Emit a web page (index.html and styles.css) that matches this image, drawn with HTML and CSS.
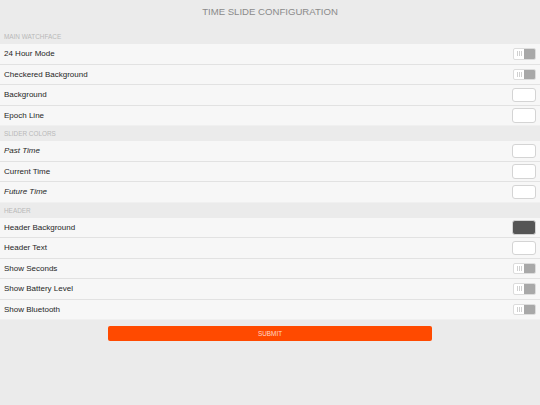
FILE: index.html
```html
<!DOCTYPE html>
<html>
<head>
<meta charset="utf-8">
<link rel="stylesheet" href="styles.css">
</head>
<body>
<div class="page">
  <h1 class="title">TIME SLIDE CONFIGURATION</h1>

  <div class="section-label">MAIN WATCHFACE</div>
  <div class="row"><span class="label">24 Hour Mode</span><span class="toggle"><span class="grip"><i></i><i></i><i></i></span><span class="knob"></span></span></div>
  <div class="row"><span class="label">Checkered Background</span><span class="toggle"><span class="grip"><i></i><i></i><i></i></span><span class="knob"></span></span></div>
  <div class="row"><span class="label">Background</span><span class="swatch"></span></div>
  <div class="row last"><span class="label">Epoch Line</span><span class="swatch"></span></div>

  <div class="section-label">SLIDER COLORS</div>
  <div class="row"><span class="label italic">Past Time</span><span class="swatch"></span></div>
  <div class="row"><span class="label">Current Time</span><span class="swatch"></span></div>
  <div class="row last"><span class="label italic">Future Time</span><span class="swatch"></span></div>

  <div class="section-label">HEADER</div>
  <div class="row"><span class="label">Header Background</span><span class="swatch dark"></span></div>
  <div class="row"><span class="label">Header Text</span><span class="swatch"></span></div>
  <div class="row"><span class="label">Show Seconds</span><span class="toggle"><span class="grip"><i></i><i></i><i></i></span><span class="knob"></span></span></div>
  <div class="row"><span class="label">Show Battery Level</span><span class="toggle"><span class="grip"><i></i><i></i><i></i></span><span class="knob"></span></span></div>
  <div class="row last"><span class="label">Show Bluetooth</span><span class="toggle"><span class="grip"><i></i><i></i><i></i></span><span class="knob"></span></span></div>

  <div class="actions"><button class="submit">SUBMIT</button></div>
</div>
</body>
</html>
```

FILE: styles.css
```css
html, body {
  margin: 0;
  padding: 0;
  background: #ebebeb;
}
body {
  font-family: "Liberation Sans", Arial, sans-serif;
  width: 540px;
  height: 405px;
  overflow: hidden;
}
.page {
  display: flex;
  flex-direction: column;
}
.title {
  margin: 0;
  height: 29px;
  box-sizing: border-box;
  padding-top: 6px;
  font-size: 9.6px;
  line-height: 12px;
  font-weight: normal;
  color: #8a8a8a;
  text-align: center;
}
.section-label {
  height: 15px;
  line-height: 15px;
  padding-left: 4px;
  font-size: 6.4px;
  color: #b8b8b8;
  background: #ebebeb;
}
.row {
  height: 19.5px;
  border-bottom: 1px solid #e2e2e2;
  background: #f7f7f7;
  display: flex;
  align-items: center;
  justify-content: space-between;
  padding: 0 4px;
}
.row.last {
  border-bottom-color: #f0f0f0;
}
.label {
  font-size: 8px;
  color: #262626;
}
.italic {
  font-style: italic;
}
.swatch {
  width: 22.5px;
  height: 12.5px;
  border: 1px solid #d4d4d4;
  border-radius: 3px;
  background: #fff;
}
.swatch.dark {
  background: #555;
  border-color: #d4d4d4;
}
.toggle {
  width: 23px;
  height: 11.5px;
  box-sizing: border-box;
  border: 1px solid #dcdcdc;
  border-radius: 2px;
  display: flex;
  overflow: hidden;
  background: #fff;
}
.grip {
  flex: 1;
  display: flex;
  align-items: center;
  justify-content: center;
  gap: 1px;
}
.grip i {
  display: block;
  width: 1px;
  height: 5px;
  background: #d0d0d0;
}
.knob {
  width: 11px;
  background: #a8a8a8;
}
.actions {
  display: flex;
  justify-content: center;
  padding-top: 6px;
}
.submit {
  width: 324px;
  height: 15px;
  border: 0;
  border-radius: 2px;
  background: #ff4a00;
  color: #ffd9c8;
  font-family: "Liberation Sans", Arial, sans-serif;
  font-size: 6.4px;
  padding: 0;
  line-height: 15px;
}
```
